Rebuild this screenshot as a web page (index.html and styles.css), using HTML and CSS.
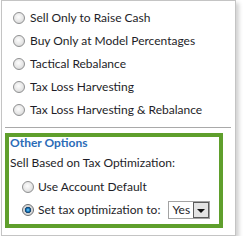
FILE: index.html
```html
<!DOCTYPE html>
<html lang="en">
<head>
    <meta charset="UTF-8">
    <title>Rebalance Options</title>
    <link rel="stylesheet" href="styles.css">
</head>
<body>
    <div class="panel">
        <div class="choices">
            <label class="choice"><input type="radio" name="mode"> Sell Only to Raise Cash</label>
            <label class="choice"><input type="radio" name="mode"> Buy Only at Model Percentages</label>
            <label class="choice"><input type="radio" name="mode"> Tactical Rebalance</label>
            <label class="choice"><input type="radio" name="mode"> Tax Loss Harvesting</label>
            <label class="choice"><input type="radio" name="mode"> Tax Loss Harvesting &amp; Rebalance</label>
        </div>

        <div class="divider"></div>

        <div class="other">
            <div class="other-title">Other Options</div>
            <div class="other-label">Sell Based on Tax Optimization:</div>
            <label class="choice sub"><input type="radio" name="tax"> Use Account Default</label>
            <label class="choice sub"><input type="radio" name="tax" checked> Set tax optimization to:
                <span class="select">
                    <span class="select-value">Yes</span>
                    <span class="select-btn"><span class="arrow"></span></span>
                </span>
            </label>
        </div>
    </div>
</body>
</html>
```

FILE: styles.css
```css
body {
    margin: 0;
    padding: 0;
    background: #fff;
    font-family: 'Lato', sans-serif;
    font-size: 12px;
    color: #1e1e28;
}

.panel {
    width: 233px;
    height: 234px;
    margin-left: 1px;
    border: 1px solid #c4c4c4;
    box-shadow: 3px 3px 4px rgba(0, 0, 0, 0.18);
    background: #fff;
}

.choices {
    display: flex;
    flex-direction: column;
    padding-top: 5px;
}

.choice {
    display: flex;
    align-items: center;
    height: 23px;
    padding-left: 11px;
    white-space: nowrap;
}

.choice input {
    appearance: none;
    -webkit-appearance: none;
    flex: none;
    width: 12px;
    height: 12px;
    margin: 0 5px 0 0;
    border: 1px solid #8f9091;
    border-radius: 50%;
    background: radial-gradient(circle at 45% 40%, #fdfdfd 0%, #e6e6e6 55%, #c9c9c9 100%);
    box-sizing: border-box;
}

.choice input:checked {
    border-color: #6a6d70;
    background: radial-gradient(circle at 50% 50%, #7fd6ff 0%, #1d7fc2 22%, #0c3a66 40%, #cfcfcf 48%, #f4f4f4 100%);
}

.divider {
    height: 1px;
    background: #a9a9a9;
    margin: 6px 4px 0 3px;
}

.other {
    width: 209px;
    height: 87px;
    margin: 5px 0 0 3px;
    border: 4px solid #5f9f2c;
    padding: 0 0 0 1px;
}

.other-title {
    color: #2b6cb7;
    font-weight: bold;
    line-height: 12px;
}

.other-label {
    line-height: 16px;
    margin-top: 6px;
    margin-bottom: 4px;
}

.choice.sub {
    padding-left: 12px;
}

.choice.sub input {
    margin-right: 4px;
}

.select {
    display: inline-flex;
    flex: none;
    width: 42px;
    height: 18px;
    margin-left: 8px;
    border: 1px solid #a3a3a3;
    box-sizing: border-box;
    background: #fff;
}

.select-value {
    flex: 1;
    line-height: 16px;
    padding-left: 3px;
}

.select-btn {
    width: 16px;
    border: 1px solid #5b5b5b;
    background: #e3e3e3;
    box-sizing: border-box;
    display: flex;
    align-items: center;
    justify-content: center;
}

.arrow {
    width: 0;
    height: 0;
    border-left: 4px solid transparent;
    border-right: 4px solid transparent;
    border-top: 4px solid #111;
    margin-top: 2px;
}
```
